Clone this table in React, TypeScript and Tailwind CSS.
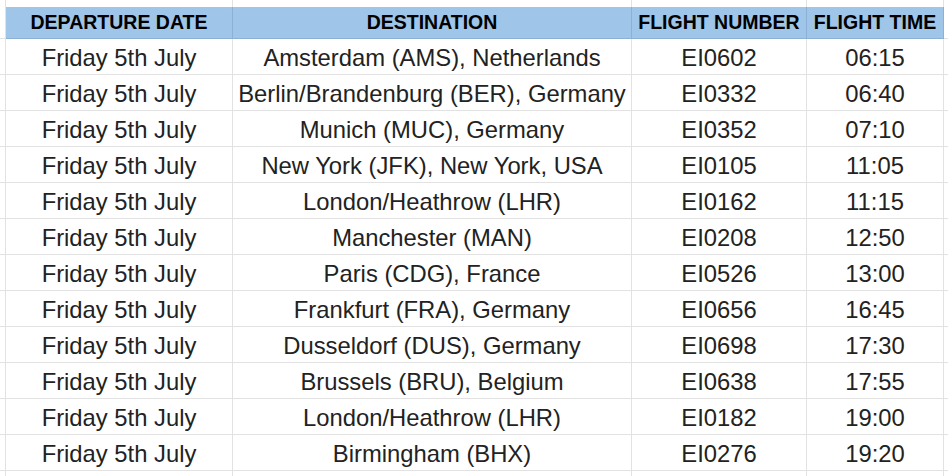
import React from "react";

const rows: [string, string, string, string][] = [
  ["Friday 5th July", "Amsterdam (AMS), Netherlands", "EI0602", "06:15"],
  ["Friday 5th July", "Berlin/Brandenburg (BER), Germany", "EI0332", "06:40"],
  ["Friday 5th July", "Munich (MUC), Germany", "EI0352", "07:10"],
  ["Friday 5th July", "New York (JFK), New York, USA", "EI0105", "11:05"],
  ["Friday 5th July", "London/Heathrow (LHR)", "EI0162", "11:15"],
  ["Friday 5th July", "Manchester (MAN)", "EI0208", "12:50"],
  ["Friday 5th July", "Paris (CDG), France", "EI0526", "13:00"],
  ["Friday 5th July", "Frankfurt (FRA), Germany", "EI0656", "16:45"],
  ["Friday 5th July", "Dusseldorf (DUS), Germany", "EI0698", "17:30"],
  ["Friday 5th July", "Brussels (BRU), Belgium", "EI0638", "17:55"],
  ["Friday 5th July", "London/Heathrow (LHR)", "EI0182", "19:00"],
  ["Friday 5th July", "Birmingham (BHX)", "EI0276", "19:20"],
];

const headers = ["DEPARTURE DATE", "DESTINATION", "FLIGHT NUMBER", "FLIGHT TIME"];

export default function App() {
  return (
    <div
      className="w-[948px] h-[476px] overflow-hidden bg-white"
      style={{ fontFamily: '"Liberation Sans", Arial, sans-serif' }}
    >
      <div className="grid grid-cols-[6px_227px_399px_175px_137px_1fr]">
        {/* top partial row */}
        <div className="h-[7px] border-r border-[#e2e2e2]" />
        <div className="h-[7px] border-r border-[#e2e2e2]" />
        <div className="h-[7px] border-r border-[#e2e2e2]" />
        <div className="h-[7px] border-r border-[#e2e2e2]" />
        <div className="h-[7px] border-r border-[#e2e2e2]" />
        <div className="h-[7px]" />

        {/* header row */}
        <div className="h-[32px] border-r border-b border-[#e2e2e2]" />
        {headers.map((h) => (
          <div
            key={h}
            className="h-[32px] pt-[1px] bg-[#9fc5e8] border-r border-b border-[#8db0d6] flex items-center justify-center text-[19.5px] font-bold text-black whitespace-nowrap"
          >
            {h}
          </div>
        ))}
        <div className="h-[32px] border-b border-[#e2e2e2]" />

        {/* data rows */}
        {rows.map((r, i) => (
          <React.Fragment key={i}>
            <div className="h-[36px] border-r border-b border-[#e2e2e2]" />
            {r.map((c, j) => (
              <div
                key={j}
                className="h-[36px] pt-[3px] border-r border-b border-[#e2e2e2] flex items-center justify-center text-[23.8px] text-[#222222] whitespace-nowrap"
              >
                {c}
              </div>
            ))}
            <div className="h-[36px] border-b border-[#e2e2e2]" />
          </React.Fragment>
        ))}

        {/* partial bottom row */}
        <div className="h-[36px] border-r border-[#e2e2e2]" />
        <div className="h-[36px] border-r border-[#e2e2e2]" />
        <div className="h-[36px] border-r border-[#e2e2e2]" />
        <div className="h-[36px] border-r border-[#e2e2e2]" />
        <div className="h-[36px] border-r border-[#e2e2e2]" />
        <div className="h-[36px]" />
      </div>
    </div>
  );
}
